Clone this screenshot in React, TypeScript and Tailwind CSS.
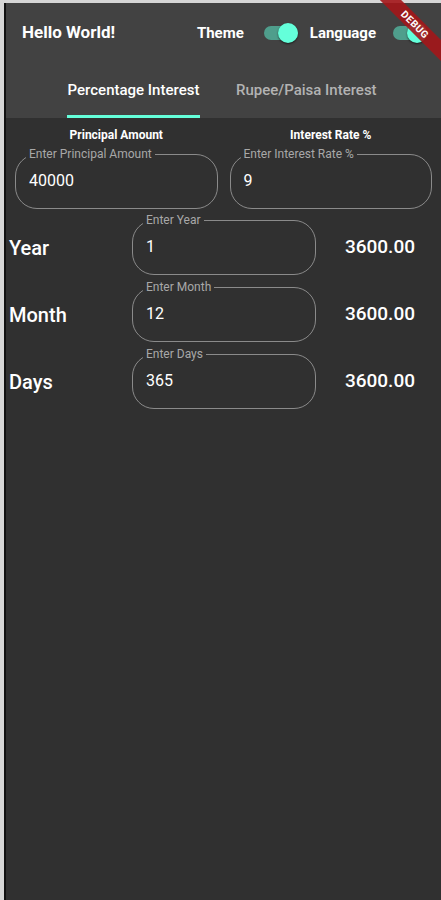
import React from "react";

const font = { fontFamily: "Roboto, 'Noto Sans', sans-serif" };

function Toggle({ className = "" }: { className?: string }) {
  return (
    <div className={`relative h-[20px] w-[34px] shrink-0 ${className}`}>
      <div className="absolute left-0 top-[3px] h-[14px] w-[34px] rounded-full bg-[#4f9e8c]" />
      <div className="absolute right-0 top-0 h-[20px] w-[20px] rounded-full bg-[#64ffda] shadow-[0_1px_2px_rgba(0,0,0,0.6)]" />
    </div>
  );
}

function Field({ label, value, className = "" }: { label: string; value: string; className?: string }) {
  return (
    <div className={`relative h-[55px] rounded-[22px] border border-[#8a8a8a] ${className}`}>
      <span className="absolute left-[10px] top-[-9px] bg-[#303030] px-[3px] text-[12px] leading-[16px] text-[#a8a8a8]">
        {label}
      </span>
      <div className="flex h-full items-center pl-[13px] pb-[2px] text-[16px] text-white">{value}</div>
    </div>
  );
}

const rows = [
  { name: "Year", label: "Enter Year", value: "1" },
  { name: "Month", label: "Enter Month", value: "12" },
  { name: "Days", label: "Enter Days", value: "365" },
];

export default function App() {
  return (
    <div className="flex h-[900px] w-[441px] flex-col overflow-hidden bg-[#d6d6d6] pl-[4px] pt-[3px]" style={font}>
      <div className="relative flex flex-1 flex-col border-l-2 border-[#111] bg-[#303030]">
        <header className="bg-[#424242]">
          <div className="flex h-[60px] items-center pl-[16px] text-white">
            <h1 className="text-[17px] font-bold">Hello World!</h1>
            <div className="ml-auto flex items-center">
              <span className="text-[15px] font-bold">Theme</span>
              <Toggle className="ml-[20px] mr-[12px]" />
              <span className="text-[15px] font-bold">Language</span>
              <Toggle className="ml-[17px] mr-[14px]" />
            </div>
          </div>
          <nav className="flex h-[55px] pl-[61px] text-[15px] font-medium">
            <div className="flex flex-col items-center justify-between">
              <span className="flex-1 pt-[16px] text-white">Percentage Interest</span>
              <span className="h-[3px] w-[133px] bg-[#64ffda]" />
            </div>
            <div className="ml-[36px] pt-[16px] text-[#b3b3b3]">Rupee/Paisa Interest</div>
          </nav>
        </header>

        <main className="text-white">
          <div className="grid grid-cols-2 gap-x-[12px] pl-[9px] pr-[9px] pt-[8px]">
            <p className="text-center text-[12px] font-bold">Principal Amount</p>
            <p className="text-center text-[12px] font-bold">Interest Rate %</p>
            <Field className="mt-[10px]" label="Enter Principal Amount" value="40000" />
            <Field className="mt-[10px]" label="Enter Interest Rate %" value="9" />
          </div>

          <div className="mt-[11px] flex flex-col gap-[12px]">
            {rows.map((r) => (
              <div key={r.name} className="flex items-center pl-[3px] pr-[26px]">
                <span className="w-[123px] text-[20px] font-medium">{r.name}</span>
                <Field className="w-[184px]" label={r.label} value={r.value} />
                <span className="flex-1 text-right text-[19px] font-medium">3600.00</span>
              </div>
            ))}
          </div>
        </main>

        <div className="pointer-events-none absolute right-0 top-[-3px] h-[64px] w-[64px] overflow-hidden">
          <div className="absolute left-[-22px] top-[17px] flex h-[15px] w-[120px] rotate-45 items-center justify-center bg-[#a4161a]/90 text-[10px] font-bold leading-none tracking-[0.5px] text-white">
            DEBUG
          </div>
        </div>
      </div>
    </div>
  );
}
